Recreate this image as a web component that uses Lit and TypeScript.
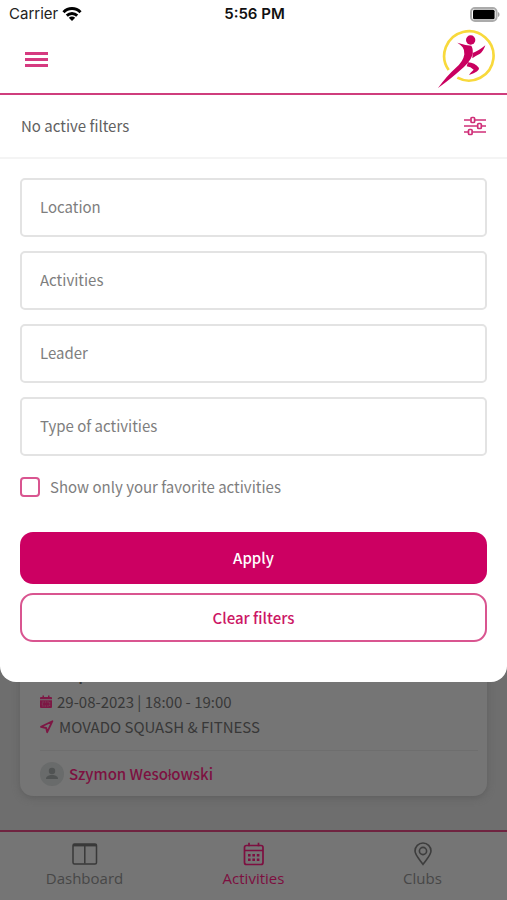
import { LitElement, html, css, svg } from "lit";
import { customElement, property, state } from "lit/decorators.js";
import { classMap } from "lit/directives/class-map.js";

const wifiIcon = svg`<svg width="20" height="16" viewBox="0 0 20 16" fill="none" stroke="#000" stroke-width="3">
  <path d="M1.5 6.2C6.2 1.4 13.8 1.4 18.5 6.2"/><path d="M4.8 9.6c3-2.8 7.400-2.800 10.400 0"/>
  <path d="M10 15 6.800 11.800c1.800-1.600 4.600-1.600 6.400 0z" fill="#000" stroke="none"/></svg>`;

const batteryIcon = svg`<svg width="30" height="15" viewBox="0 0 30 15">
  <rect x="1" y="1" width="25.600" height="13" rx="4" fill="#fff" stroke="#ababab" stroke-width="2"/>
  <rect x="3" y="2.700" width="21.600" height="9.600" rx="1.500" fill="#000"/>
  <path d="M28 5c2 .8 2 4.200 0 5z" fill="#a2a2a2"/></svg>`;

const logo = svg`<svg width="57" height="60" viewBox="54 86 171 180" role="img" aria-label="Club logo">
  <path d="M86 209A74 74 0 1 1 112 232" fill="none" stroke="#f8d93c" stroke-width="8"/>
  <g fill="#c9005f"><circle cx="152" cy="119" r="14"/>
  <path d="M112 127Q136 135 154 136Q161 148 157 165Q149 188 119 211Q96 232 54 263Q82 225 107 203Q130 184 133 162Q134 149 128 141Q122 133 112 127Z"/>
  <path d="M158 158Q174 153 196 135Q190 153 180 160Q167 166 157 174Z"/>
  <path d="M144 186Q164 187 177 203Q179 214 147 224Q151 217 161 208Q152 199 140 198Z"/></g></svg>`;

const slidersIcon = svg`<svg width="22" height="20" viewBox="0 0 22 20" fill="none" stroke="#cf2f78" stroke-width="1.700">
  <path d="M0 4h6.500M10.500 4H22M0 10h13.500M17.500 10H22M0 16h4.500M8.500 16H22"/>
  <rect x="7" y="1.500" width="3.600" height="5" rx="1"/><rect x="13.700" y="7.500" width="3.600" height="5" rx="1"/>
  <rect x="4.500" y="13.500" width="3.600" height="5" rx="1"/></svg>`;

const dateIcon = svg`<svg width="12" height="14" viewBox="0 0 12 14">
  <path d="M1 2h1.500V.5H4V2h4V.5h1.500V2H11a1 1 0 0 1 1 1v1.300H0V3a1 1 0 0 1 1-1zM0 5.200h12V12a1 1 0 0 1-1 1H1a1 1 0 0 1-1-1z" fill="#7d1744"/>
  <path d="M2.300 7h7.400v4H2.300z" fill="none" stroke="#757575" stroke-opacity=".5" stroke-dasharray="1.500 1"/></svg>`;

const arrowIcon = svg`<svg width="14" height="14" viewBox="0 0 14 14" fill="none" stroke="#7d1744" stroke-width="1.800" stroke-linejoin="round">
  <path d="M12.400 1.200 7.200 12.200 6.200 8 1 6.800z"/></svg>`;

const avatarIcon = svg`<svg width="24" height="24" viewBox="0 0 24 24">
  <circle cx="12" cy="12" r="12" fill="#696b6b"/><circle cx="12" cy="9" r="3.200" fill="#505353"/>
  <path d="M6 17c0-3 3-4 6-4s6 1 6 4z" fill="#505353"/></svg>`;

const dashboardIcon = svg`<svg width="26" height="24" viewBox="0 0 26 24" fill="none" stroke="#393939" stroke-width="1.500">
  <rect x="1" y="2" width="23.500" height="20" rx="1.500"/><path d="M1 3.200h23.500" stroke-width="2.400"/><path d="M12.800 3v18.500"/></svg>`;

const calendarIcon = svg`<svg width="22" height="24" viewBox="0 0 22 24" fill="none" stroke="#7d0f40" stroke-width="1.700">
  <rect x="1.500" y="3.500" width="18.500" height="19" rx="2"/><path d="M1.500 8.500h18.500M6 .8v3.500M15.500.8v3.500"/>
  <path d="M5 13.300h11.400M5 17.700h11.400" stroke-width="2.600" stroke-dasharray="2.600 1.800"/></svg>`;

const pinIcon = svg`<svg width="20" height="24" viewBox="0 0 20 24" fill="none" stroke="#3d3d3d" stroke-width="1.600">
  <path d="M10 22.300C7 18 2 13 2 9a8 8 0 0 1 16 0c0 4-5 9-8 13.300z"/><circle cx="10" cy="9" r="3.600"/></svg>`;

@customElement("status-bar")
class StatusBar extends LitElement {
  static styles = css`
    :host { display: grid; grid-template-columns: 1fr auto 1fr; align-items: center; height: 28px; padding: 0 7px 0 9px;
      font: 15px/20px Inter, sans-serif; color: #222; }
    .carrier { display: flex; align-items: center; gap: 4px; }
    .time { font-weight: 600; color: #111; }
    .battery { display: flex; justify-content: flex-end; }
  `;
  render() {
    return html`<span class="carrier">Carrier ${wifiIcon}</span><span class="time">5:56 PM</span>
      <span class="battery">${batteryIcon}</span>`;
  }
}

@customElement("filter-sheet")
class FilterSheet extends LitElement {
  @state() private fields = ["Location", "Activities", "Leader", "Type of activities"];
  static styles = css`
    :host { display: block; }
    .summary { display: flex; align-items: center; justify-content: space-between; height: 62px; padding: 0 21px;
      border-bottom: 2px solid #f4f4f4; color: #616161; }
    .icon-button { display: flex; padding: 0; border: 0; background: none; cursor: pointer; }
    .form { display: flex; flex-direction: column; padding: 19px 20px 40px; }
    .fields { display: grid; gap: 14px; }
    .field { box-sizing: border-box; width: 100%; height: 59px; padding: 0 18px 2px; border: 2px solid #e3e3e3; border-radius: 5px;
      font: inherit; color: #444; background: #fff; }
    .field::placeholder { color: #7e7e7e; opacity: 1; }
    .favorite { display: flex; align-items: center; gap: 10px; margin: 19px 0 33px; color: #7e7e7e; }
    .tick { appearance: none; box-sizing: border-box; width: 20px; height: 20px; margin: 0; border: 2px solid #d95590;
      border-radius: 4px; background: #fff; }
    .tick:checked { background: #cc0062; }
    .button { height: 52px; padding: 0; border: 0; border-radius: 13px; font: inherit; font-weight: 500;
      background: #cc0062; color: #fff; }
    .outline { height: 49px; margin-top: 9px; border: 2px solid #d95590; background: #fff; color: #cc1765; }
  `;
  render() {
    return html`
      <div class="summary"><span>No active filters</span>
        <button class="icon-button" aria-label="Filters">${slidersIcon}</button></div>
      <form class="form" @submit=${(e: Event) => e.preventDefault()}>
        <div class="fields">${this.fields.map((f) => html`<input class="field" type="text" aria-label=${f} placeholder=${f}>`)}</div>
        <label class="favorite"><input class="tick" type="checkbox">Show only your favorite activities</label>
        <button class="button" type="submit">Apply</button>
        <button class="button outline" type="reset">Clear filters</button>
      </form>`;
  }
}

@customElement("activity-card")
class ActivityCard extends LitElement {
  static styles = css`
    :host { display: block; padding: 0 9px 10px 20px; border-radius: 13px; background: #757575; color: #383838;
      box-shadow: 0 2px 7px #5f5f5f; }
    .title { margin: 0; padding-bottom: 7px; font-size: 18px; line-height: 20px; font-weight: 500; }
    .line { display: flex; align-items: center; gap: 5px; line-height: 25px; }
    .leader { display: flex; align-items: center; gap: 5px; margin-top: 11px; padding-top: 11px; border-top: 1px solid #6e6e6e; line-height: 24px; }
    .name { color: #7d1141; text-decoration: none; font-weight: 500; }
  `;
  render() {
    return html`<h2 class="title">Jump</h2>
      <div class="line">${dateIcon}<span>29-08-2023 | 18:00 - 19:00</span></div>
      <div class="line">${arrowIcon}<span>MOVADO SQUASH &amp; FITNESS</span></div>
      <div class="leader">${avatarIcon}<a class="name" href="#leader">Szymon Wesołowski</a></div>`;
  }
}

@customElement("tab-bar")
class TabBar extends LitElement {
  @property() active = "Activities";
  static styles = css`
    :host { display: block; border-top: 2px solid #6f2440; background: #757575; }
    .tabs { display: grid; grid-template-columns: repeat(3, 1fr); }
    .tab { display: flex; flex-direction: column; align-items: center; gap: 1px; padding: 10px 0 11px; text-decoration: none;
      color: #474747; font: 15px/22px "Open Sans", sans-serif; }
    .active { color: #7d0f40; }
  `;
  render() {
    const tabs = [["Dashboard", dashboardIcon], ["Activities", calendarIcon], ["Clubs", pinIcon]] as const;
    return html`<nav class="tabs">${tabs.map(([name, icon]) => html`
      <a class=${classMap({ tab: true, active: name === this.active })} href="#${name.toLowerCase()}">${icon}<span>${name}</span></a>`)}</nav>`;
  }
}

@customElement("app-root")
class AppRoot extends LitElement {
  static styles = css`
    :host { display: flex; flex-direction: column; min-height: 100vh; background: #6e6e6e;
      font: 15px/24px "Noto Sans CJK SC", sans-serif; }
    .sheet { position: relative; background: #fff; border-radius: 0 0 16px 16px; }
    .header { display: flex; align-items: center; justify-content: space-between; box-sizing: border-box; height: 67px;
      padding: 0 12px 3px 25px; border-bottom: 2px solid #cf3d7d; }
    .menu { display: grid; gap: 3px; width: 23px; padding: 0; border: 0; background: none; }
    .bar { height: 3px; background: #d63a80; }
    .list { flex: 1; padding: 0 20px; margin-top: -20px; }
  `;
  render() {
    return html`
      <div class="sheet">
        <status-bar></status-bar>
        <header class="header">
          <button class="menu" aria-label="Menu"><span class="bar"></span><span class="bar"></span><span class="bar"></span></button>
          ${logo}
        </header>
        <filter-sheet></filter-sheet>
      </div>
      <main class="list"><activity-card></activity-card></main>
      <tab-bar></tab-bar>`;
  }
}
